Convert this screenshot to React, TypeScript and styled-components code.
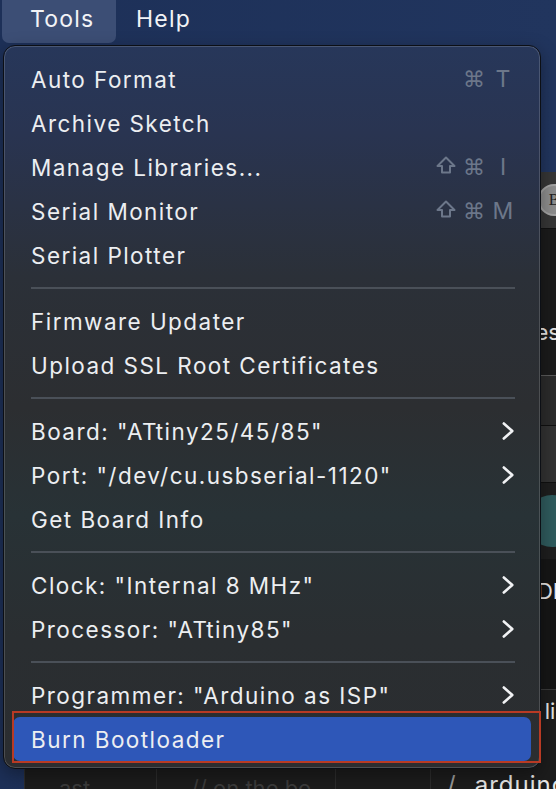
import React from "react";
import styled, { createGlobalStyle } from "styled-components";

const Global = createGlobalStyle`
  html, body { margin: 0; padding: 0; }
  body {
    width: 556px; height: 789px; overflow: hidden;
    background: #1f335b;
    font-family: Inter, "Liberation Sans", sans-serif;
    -webkit-font-smoothing: antialiased;
  }
`;

const Page = styled.div`
  position: relative;
  width: 556px;
  height: 789px;
  overflow: hidden;
  background: linear-gradient(90deg, #1d3058 0%, #21355e 100%);
`;

const MenuBar = styled.div`
  height: 44px;
  display: flex;
  align-items: stretch;
  padding-left: 2px;
`;

const MenuTitle = styled.div<{ $active?: boolean }>`
  display: flex;
  align-items: center;
  box-sizing: border-box;
  width: ${(p) => (p.$active ? "114px" : "auto")};
  padding: 0 0 5px ${(p) => (p.$active ? "28px" : "20px")};
  margin-bottom: 1px;
  border-radius: 0 0 7px 7px;
  background: ${(p) => (p.$active ? "#3c4e75" : "transparent")};
  color: #f2f3f6;
  font-size: 23px;
  letter-spacing: 1.2px;
`;

const AppWindow = styled.div`
  margin: 128px 0 0 24px;
  height: 617px;
  display: flex;
  flex-direction: column;
  background: #161616;
`;

const Toolbar = styled.div`
  height: 56px;
  background: #363636;
  display: flex;
  align-items: center;
  justify-content: flex-end;
  border-bottom: 1px solid #111;
`;

const Badge = styled.div`
  width: 28px;
  height: 28px;
  margin-right: -14px;
  border-radius: 50%;
  background: #8d8d8d;
  border: 2px solid #a4a4a4;
  display: flex;
  align-items: center;
  justify-content: center;
  color: #222;
  font-family: "Liberation Serif", serif;
  font-size: 16px;
`;

const Pane = styled.div<{ $h: number; $bg: string; $line?: string; $pt?: number }>`
  height: ${(p) => p.$h}px;
  box-sizing: border-box;
  padding-top: ${(p) => p.$pt ?? 0}px;
  background: ${(p) => p.$bg};
  border-bottom: 1px solid ${(p) => p.$line || "transparent"};
  display: flex;
  align-items: ${(p) => (p.$pt ? "flex-start" : "center")};
  justify-content: flex-end;
  overflow: hidden;
  color: #e6e6e6;
  font-size: 22px;
  line-height: 26px;
  white-space: nowrap;
`;

const Circle = styled.div`
  width: 52px;
  height: 52px;
  margin-right: -22px;
  border-radius: 50%;
  background: #2f5b5d;
`;

const BottomRow = styled.div`
  flex: 1;
  display: flex;
  align-items: stretch;
  background: #1c1c1c;
`;

const Col = styled.div<{ $w: number }>`
  width: ${(p) => p.$w}px;
  border-left: 1px solid #2c2c2c;
  display: flex;
  align-items: flex-end;
  padding-left: 34px;
  box-sizing: border-box;
  color: #3b3b3b;
  font-size: 22px;
  line-height: 26px;
  white-space: nowrap;
  overflow: hidden;
  & > span { margin-bottom: -12px; }
`;

const PathText = styled.div`
  flex: 1;
  display: flex;
  align-items: flex-end;
  gap: 18px;
  padding-left: 16px;
  border-left: 1px solid #2c2c2c;
  color: #e8e8e8;
  font-size: 24px;
  line-height: 28px;
  letter-spacing: 1px;
  white-space: nowrap;
  overflow: hidden;
  & > span { margin-bottom: -10px; }
`;

const Slash = styled.span`
  color: #9a9a9a;
`;

const Menu = styled.div`
  position: absolute;
  left: 3px;
  top: 45px;
  width: 538px;
  height: 724px;
  box-sizing: border-box;
  border-radius: 12px;
  border: 1px solid #0c0f15;
  box-shadow: inset 0 0 0 1px rgba(255, 255, 255, 0.16), 0 6px 18px rgba(0, 0, 0, 0.35);
  background: linear-gradient(
    180deg,
    #27375a 0%,
    #293451 12%,
    #2b3038 32%,
    #2c2e31 50%,
    #283236 65%,
    #2a2e31 82%,
    #2b2d30 100%
  );
  padding: 11px 9px 0 9px;
  display: flex;
  flex-direction: column;
`;

const Item = styled.div<{ $selected?: boolean }>`
  height: 44px;
  flex: 0 0 auto;
  display: flex;
  align-items: center;
  justify-content: space-between;
  padding: 0 16px 0 18px;
  border-radius: 7px;
  background: ${(p) => (p.$selected ? "#2e57b8" : "transparent")};
  color: #eceef1;
  font-size: 22.5px;
  letter-spacing: 1.45px;
  white-space: nowrap;
`;

const Shortcut = styled.span`
  display: flex;
  align-items: center;
  gap: 6px;
  color: #6c778a;
  font-size: 22px;
  font-family: "DejaVu Sans", Inter, sans-serif;
  letter-spacing: 0;
`;

const Mod = styled.span`
  width: 22px;
  text-align: center;
`;

const Key = styled.span`
  width: 24px;
  text-align: center;
  font-family: Inter, "Liberation Sans", sans-serif;
  font-size: 23px;
`;

const Separator = styled.div`
  height: 22px;
  flex: 0 0 auto;
  display: flex;
  align-items: center;
  padding: 0 16px 0 18px;
  &::after {
    content: "";
    flex: 1;
    height: 2px;
    background: #4a5058;
  }
`;

const Annotation = styled.div`
  position: absolute;
  left: 12px;
  top: 711px;
  width: 529px;
  height: 52px;
  box-sizing: border-box;
  border: 2px solid #b83a24;
  pointer-events: none;
`;

const ShiftIcon = () => (
  <svg width="22" height="20" viewBox="0 0 22 20">
    <path
      d="M11 2.5 L19.5 11 H15 V17.5 H7 V11 H2.5 Z"
      fill="none"
      stroke="#6c778a"
      strokeWidth="2"
      strokeLinejoin="round"
    />
  </svg>
);

const Chevron = () => (
  <svg width="13" height="20" viewBox="0 0 13 20">
    <path d="M1.8 2.5 L10.3 10 L1.8 17.5" fill="none" stroke="#f1f2f4" strokeWidth="2.6" strokeLinecap="round" strokeLinejoin="round" />
  </svg>
);

type Entry =
  | { kind: "sep" }
  | {
      kind: "item";
      label: string;
      shift?: boolean;
      cmdKey?: string;
      sub?: boolean;
      selected?: boolean;
    };

const entries: Entry[] = [
  { kind: "item", label: "Auto Format", cmdKey: "T" },
  { kind: "item", label: "Archive Sketch" },
  { kind: "item", label: "Manage Libraries...", shift: true, cmdKey: "I" },
  { kind: "item", label: "Serial Monitor", shift: true, cmdKey: "M" },
  { kind: "item", label: "Serial Plotter" },
  { kind: "sep" },
  { kind: "item", label: "Firmware Updater" },
  { kind: "item", label: "Upload SSL Root Certificates" },
  { kind: "sep" },
  { kind: "item", label: 'Board: "ATtiny25/45/85"', sub: true },
  { kind: "item", label: 'Port: "/dev/cu.usbserial-1120"', sub: true },
  { kind: "item", label: "Get Board Info" },
  { kind: "sep" },
  { kind: "item", label: 'Clock: "Internal 8 MHz"', sub: true },
  { kind: "item", label: 'Processor: "ATtiny85"', sub: true },
  { kind: "sep" },
  { kind: "item", label: 'Programmer: "Arduino as ISP"', sub: true },
  { kind: "item", label: "Burn Bootloader", selected: true },
];

export default function App() {
  return (
    <Page>
      <Global />
      <MenuBar>
        <MenuTitle $active>Tools</MenuTitle>
        <MenuTitle>Help</MenuTitle>
      </MenuBar>
      <AppWindow>
        <Toolbar>
          <Badge>B</Badge>
        </Toolbar>
        <Pane $h={147} $bg="#1b1b1b" $line="#5a5a5a" $pt={90}>
          <span style={{ marginRight: -4 }}>Examples</span>
        </Pane>
        <Pane $h={50} $bg="#2b2b2b" $line="#101010" />
        <Pane $h={57} $bg="#323232" $line="#101010" />
        <Pane $h={76} $bg="#1e1e1e">
          <Circle />
        </Pane>
        <Pane $h={131} $bg="#161616" $line="#3a3a3a" $pt={19}>
          <span style={{ marginRight: -10 }}>IDE</span>
        </Pane>
        <Pane $h={58} $bg="#1c1c1c" $pt={8}>
          <span style={{ marginRight: -12 }}>lic</span>
        </Pane>
        <BottomRow>
          <Col $w={132}><span>ast</span></Col>
          <Col $w={179}><span>// on the bo</span></Col>
          <Col $w={95}></Col>
          <PathText>
            <Slash>/</Slash>
            <span>arduino</span>
          </PathText>
        </BottomRow>
      </AppWindow>
      <Menu>
        {entries.map((e, i) =>
          e.kind === "sep" ? (
            <Separator key={i} />
          ) : (
            <Item key={i} $selected={e.selected}>
              <span>{e.label}</span>
              {e.cmdKey && (
                <Shortcut>
                  {e.shift && (
                    <Mod>
                      <ShiftIcon />
                    </Mod>
                  )}
                  <Mod>⌘</Mod>
                  <Key>{e.cmdKey}</Key>
                </Shortcut>
              )}
              {e.sub && <Chevron />}
            </Item>
          )
        )}
      </Menu>
      <Annotation />
    </Page>
  );
}
